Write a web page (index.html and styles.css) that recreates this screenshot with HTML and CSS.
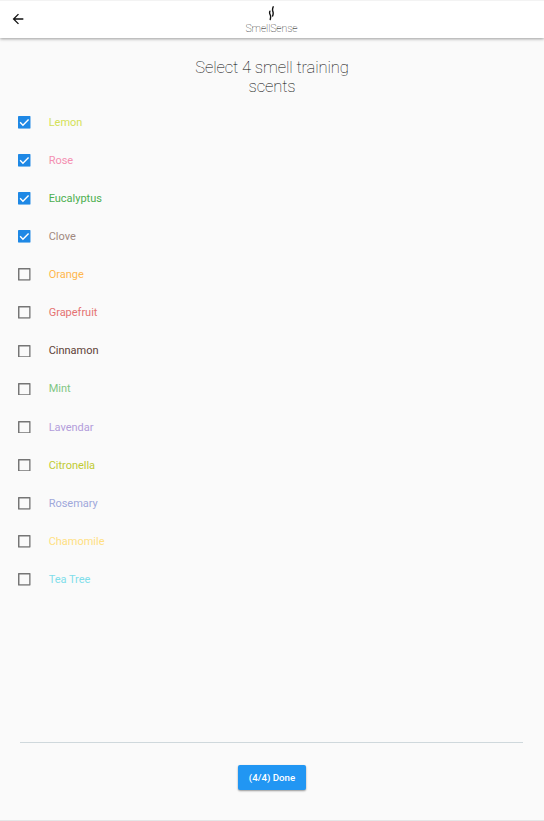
FILE: index.html
```html
<!DOCTYPE html>
<html lang="en">
<head>
<meta charset="utf-8">
<title>SmellSense</title>
<link rel="stylesheet" href="styles.css">
</head>
<body>
<svg class="defs" width="0" height="0" aria-hidden="true">
  <symbol id="on" viewBox="0 0 18 18"><rect width="18" height="18" rx="1" fill="#1e88e5"/><path d="M3 9 7 13 15 5" fill="none" stroke="#fff" stroke-width="2"/></symbol>
  <symbol id="off" viewBox="0 0 18 18"><rect x="1" y="1" width="16" height="16" rx=".4" fill="none" stroke="#757575" stroke-width="2.200"/></symbol>
</svg>
<header class="bar">
  <svg class="back" viewBox="0 0 24 24"><path d="M20 11H7.83l5.59-5.59L12 4l-8 8 8 8 1.41-1.41L7.83 13H20v-2z"/></svg>
  <div class="brand">
    <svg class="logo" viewBox="0 0 8 15"><path d="M1.900 5.200C1.300 6.600 1.500 7.600 2.300 9 2.900 10.300 2.700 11.800 2.200 13.500M5.200 .8C4.300 3 4.300 4.200 4.900 5.600 5.500 7.200 5.200 8.400 4.600 10"/></svg>
    <span class="name">SmellSense</span>
  </div>
</header>
<main>
  <h1>Select 4 smell training scents</h1>
  <ul class="scents">
    <li class="lemon"><svg><use href="#on"/></svg><span>Lemon</span></li>
    <li class="rose"><svg><use href="#on"/></svg><span>Rose</span></li>
    <li class="eucalyptus"><svg><use href="#on"/></svg><span>Eucalyptus</span></li>
    <li class="clove"><svg><use href="#on"/></svg><span>Clove</span></li>
    <li class="orange"><svg><use href="#off"/></svg><span>Orange</span></li>
    <li class="grapefruit"><svg><use href="#off"/></svg><span>Grapefruit</span></li>
    <li class="cinnamon"><svg><use href="#off"/></svg><span>Cinnamon</span></li>
    <li class="mint"><svg><use href="#off"/></svg><span>Mint</span></li>
    <li class="lavendar"><svg><use href="#off"/></svg><span>Lavendar</span></li>
    <li class="citronella"><svg><use href="#off"/></svg><span>Citronella</span></li>
    <li class="rosemary"><svg><use href="#off"/></svg><span>Rosemary</span></li>
    <li class="chamomile"><svg><use href="#off"/></svg><span>Chamomile</span></li>
    <li class="teatree"><svg><use href="#off"/></svg><span>Tea Tree</span></li>
  </ul>
</main>
<footer>
  <button type="button">(4/4) Done</button>
</footer>
</body>
</html>
```
FILE: styles.css
```css
* { box-sizing: border-box; }
body {
  margin: 0;
  height: 821px;
  display: flex;
  flex-direction: column;
  background: #fafafa;
  border-bottom: 1px solid #e4e6e7;
  font-family: Roboto, sans-serif;
  overflow: hidden;
}
.defs { display: block; flex: none; }
.bar {
  height: 38px;
  flex: none;
  display: grid;
  grid-template-columns: 1fr auto 1fr;
  background: #fff;
  border-top: 1px solid #f3f3f3;
  box-shadow: 0 1px 3px rgba(0, 0, 0, .38);
}
.back { width: 16px; height: 16px; margin: 10px 0 0 10.400px; fill: #111; }
.brand { display: flex; flex-direction: column; align-items: center; }
.logo {
  width: 8px;
  height: 15px;
  margin-top: 5px;
  fill: none;
  stroke: #111;
  stroke-width: 1.4;
  stroke-linecap: round;
}
.name { margin-right: 1px; font-size: 10.5px; line-height: 16px; font-weight: 100; color: #000; letter-spacing: -.1px; }
main { flex: 1; }
h1 {
  width: 170px;
  margin: 20px auto 0;
  font-size: 16.600px;
  line-height: 19px;
  font-weight: 100;
  letter-spacing: -.12px;
  text-align: center;
  color: #000;
}
.scents { list-style: none; margin: 7.400px 0 0; padding: 0 0 0 18px; }
.scents li {
  height: 38.08px;
  display: flex;
  align-items: center;
  gap: 18px;
  font-size: 11px;
  letter-spacing: -.02px;
}
.scents svg { width: 12.700px; height: 12.700px; }
.lemon { color: #d4e157; }
.rose { color: #f48fb1; }
.eucalyptus { color: #4caf50; }
.clove { color: #a1887f; }
.orange { color: #ffb74d; }
.grapefruit { color: #e57373; }
.cinnamon { color: #5d4037; }
.mint { color: #81c784; }
.lavendar { color: #b39ddb; }
.citronella { color: #c0ca33; }
.rosemary { color: #9fa8da; }
.chamomile { color: #ffe082; }
.teatree { color: #80deea; }
footer {
  height: 78px;
  margin: 0 21px 0 20px;
  flex: none;
  border-top: 1px solid #cfd8dc;
  text-align: center;
}
button {
  width: 68px;
  height: 25px;
  margin: 22px 0 0 1px;
  padding: 0;
  border: 0;
  border-radius: 2px;
  background: #2196f3;
  box-shadow: 0 1px 2px rgba(0, 0, 0, .4);
  color: #fff;
  font: 500 9.700px Roboto, sans-serif;
}
```
